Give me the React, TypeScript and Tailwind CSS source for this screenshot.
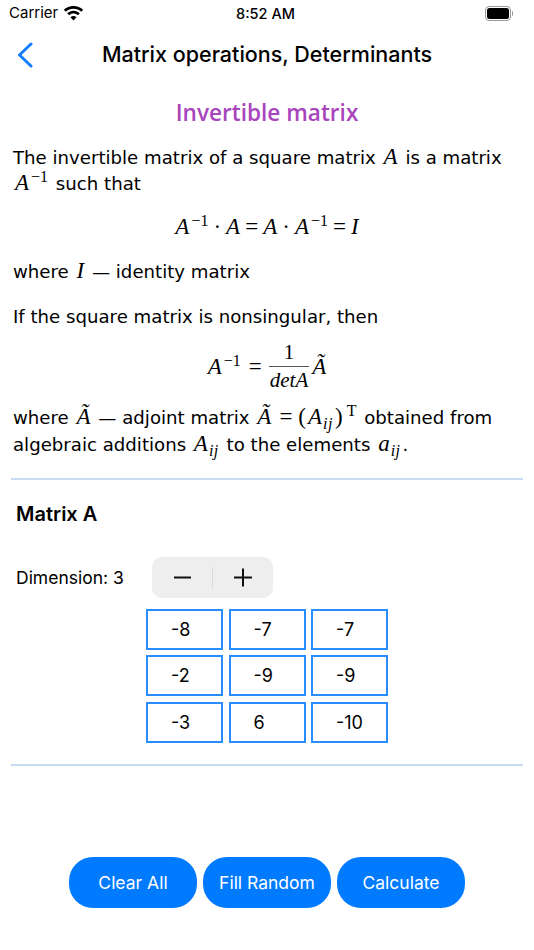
import type { ReactNode } from "react";

const matrix = [
  ["-8", "-7", "-7"],
  ["-2", "-9", "-9"],
  ["-3", "6", "-10"],
];

function M({ children, sub, sup }: { children: ReactNode; sub?: string; sup?: string }) {
  return (
    <span className="mx-[2px] font-['Liberation_Serif',serif] text-[23px] italic leading-none">
      {children}
      {sub && <span className="relative top-[5px] ml-[1px] text-[16px] tracking-[0.500px] leading-none">{sub}</span>}
      {sup && <span className="relative top-[-8px] ml-[2px] text-[16px] not-italic leading-none">{sup}</span>}
    </span>
  );
}

function Op({ children, wide }: { children: ReactNode; wide?: boolean }) {
  return (
    <span className={wide ? "mx-[6px] font-['Liberation_Serif',serif] text-[23px] leading-none" : "mx-[3px] font-['Liberation_Serif',serif] text-[23px] leading-none"}>
      {children}
    </span>
  );
}

function Cell({ value }: { value: string }) {
  return (
    <div className="flex h-[41px] w-[77px] items-center border-2 border-[#2a8dff] pl-[23px] text-[18px] text-black">
      {value}
    </div>
  );
}

function WifiIcon() {
  return (
    <svg width="21" height="15" viewBox="0 0 20 14" fill="#000">
      <path d="M10 2.400c2.800 0 5.400 1.100 7.400 3l1.800-1.900C16.700 1 13.500-.2 10-.2S3.300 1 .8 3.500l1.800 1.900c2-1.900 4.600-3 7.400-3z" />
      <path d="M10 7c1.600 0 3.100.6 4.200 1.700l1.800-1.900C14.400 5.300 12.300 4.400 10 4.400s-4.400.9-6 2.400l1.800 1.900C6.900 7.600 8.400 7 10 7z" />
      <path d="M10 9.300c-1.100 0-2.100.4-2.900 1.200L10 13.600l2.900-3.100c-.8-.8-1.800-1.200-2.900-1.200z" />
    </svg>
  );
}

function BatteryIcon() {
  return (
    <div className="flex items-center">
      <div className="flex h-[15px] w-[26px] items-center justify-center rounded-[4px] border border-[#9a9a9a]">
        <div className="h-[11px] w-[22px] rounded-[2.500px] bg-black" />
      </div>
      <div className="ml-[1px] h-[5px] w-[1px] rounded-r-sm bg-[#9a9a9a]" />
    </div>
  );
}

export default function App() {
  return (
    <div className="flex h-[950px] w-[534px] flex-col overflow-hidden bg-white font-['DejaVu_Sans',sans-serif] text-[18.150px] text-black">
      <div className="flex h-[27px] items-center justify-between pl-[9px] pr-[21px] font-['Inter',sans-serif] text-[15px]">
        <div className="flex w-[120px] items-center gap-[5px]">
          <span>Carrier</span>
          <WifiIcon />
        </div>
        <span className="ml-[9px] text-[14.500px] font-medium">8:52 AM</span>
        <div className="flex w-[120px] justify-end">
          <BatteryIcon />
        </div>
      </div>

      <div className="relative flex h-[54px] items-center justify-center font-['Inter',sans-serif] text-[21.500px] font-medium">
        <svg className="absolute left-[17px] top-[15px]" width="16" height="26" viewBox="0 0 16 26" fill="none" stroke="#147efb" strokeWidth="3" strokeLinecap="round" strokeLinejoin="round">
          <path d="M14 2 2.500 13 14 24" />
        </svg>
        Matrix operations, Determinants
      </div>

      <h1 className="mt-[16px] h-[32px] text-center font-['Open_Sans',sans-serif] text-[22.600px] font-semibold leading-[32px] text-[#a845bd]">
        Invertible matrix
      </h1>

      <div className="mt-[16px] px-[13px]">
        <p className="h-[26px] whitespace-nowrap leading-[26px]">
          The invertible matrix of a square matrix <M>A</M> is a matrix
        </p>
        <p className="h-[26px] whitespace-nowrap leading-[26px]">
          <M sup="−1">A</M> such that
        </p>
        <div className="mt-[16.500px] h-[27px] whitespace-nowrap text-center leading-[27px]">
          <M sup="−1">A</M>
          <Op>·</Op>
          <M>A</M>
          <Op>=</Op>
          <M>A</M>
          <Op>·</Op>
          <M sup="−1">A</M>
          <Op>=</Op>
          <M>I</M>
        </div>
        <p className="mt-[17px] h-[27px] whitespace-nowrap leading-[27px]">
          where <M>I</M> — identity matrix
        </p>
        <p className="mt-[18px] h-[27px] whitespace-nowrap leading-[27px]">If the square matrix is nonsingular, then</p>
        <div className="mt-[7.500px] flex h-[58px] items-center justify-center whitespace-nowrap">
          <M sup="−1">A</M>
          <Op wide>=</Op>
          <span className="mx-[1px] inline-flex flex-col items-center font-['Liberation_Serif',serif] text-[21px] leading-[27px]">
            <span className="px-[2px]">1</span>
            <span className="w-full border-t border-[#555] px-[1px] italic">detA</span>
          </span>
          <M>Ã</M>
        </div>
        <p className="mt-[10px] h-[26.500px] whitespace-nowrap leading-[26.500px]">
          where <M>Ã</M> — adjoint matrix <M>Ã</M>
          <Op wide>=</Op>
          <span className="font-['Liberation_Serif',serif] text-[23px] leading-none">(</span>
          <M sub="ij">A</M>
          <span className="font-['Liberation_Serif',serif] text-[23px] leading-none">)</span>
          <M sup="T">{""}</M> obtained from
        </p>
        <p className="h-[26.500px] whitespace-nowrap leading-[26.500px]">
          algebraic additions <M sub="ij">A</M> to the elements <M sub="ij">a</M>.
        </p>
      </div>

      <div className="mx-[11px] mt-[19.500px] h-[2px] bg-[#c8dcf2]" />

      <div className="mt-[20px] pl-[16px] font-['Inter',sans-serif] text-[20px] font-semibold leading-[28px]">Matrix A</div>

      <div className="mt-[29px] flex items-center font-['Inter',sans-serif]">
        <span className="w-[152px] pl-[16px] pt-[2px] text-[17.500px]">Dimension: 3</span>
        <div className="flex h-[41px] w-[121px] items-center justify-center rounded-[10px] bg-[#eeeeef]">
          <svg width="121" height="41" viewBox="0 0 121 41" fill="none" stroke="#111" strokeWidth="2">
            <path d="M22 20.500h17" />
            <path d="M60.500 10v22" stroke="#d9d9db" strokeWidth="1" />
            <path d="M82 20.500h18M91 11.500v18" />
          </svg>
        </div>
      </div>

      <div className="ml-[146px] mt-[11px] grid w-[242px] grid-cols-3 gap-x-[5.500px] gap-y-[5.500px] font-['Inter',sans-serif]">
        {matrix.flat().map((v, i) => (
          <Cell key={i} value={v} />
        ))}
      </div>

      <div className="mx-[11px] mt-[21.500px] h-[2px] bg-[#c8dcf2]" />

      <div className="mt-[90.500px] flex justify-center gap-[6px] font-['Inter',sans-serif] text-[17.500px] text-white">
        {["Clear All", "Fill Random", "Calculate"].map((label) => (
          <div key={label} className="flex h-[51px] w-[128px] items-center justify-center rounded-[24px] bg-[#007aff] pt-[2px]">
            {label}
          </div>
        ))}
      </div>
    </div>
  );
}
